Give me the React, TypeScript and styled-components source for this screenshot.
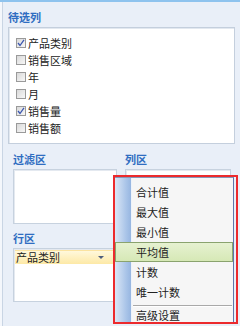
import React from 'react';
import styled, { createGlobalStyle } from 'styled-components';

const GlobalStyle = createGlobalStyle`
    html, body {
        margin: 0;
        padding: 0;
        background: #e9eff8;
    }
    body {
        font-family: "Noto Sans CJK SC", "Liberation Sans", sans-serif;
        font-size: 11px;
    }
`;

interface Field {
    name: string;
    checked: boolean;
}

const fields: Field[] = [
    { name: '产品类别', checked: true },
    { name: '销售区域', checked: false },
    { name: '年', checked: false },
    { name: '月', checked: false },
    { name: '销售量', checked: true },
    { name: '销售额', checked: false },
];

const menuItems = ['合计值', '最大值', '最小值', '平均值', '计数', '唯一计数'];

const App: React.FC = () => {
    return (
        <>
            <GlobalStyle />
            <Page>
                <Section>
                    <Title>待选列</Title>
                    <FieldBox>
                        {fields.map((f) => (
                            <FieldRow key={f.name}>
                                <CheckBox>
                                    {f.checked && (
                                        <svg width="8" height="8" viewBox="0 0 8 8">
                                            <path d="M1 4 L3 6.5 L7 0.8" fill="none" stroke="#3b57b0" strokeWidth="1.3" />
                                        </svg>
                                    )}
                                </CheckBox>
                                <span>{f.name}</span>
                            </FieldRow>
                        ))}
                    </FieldBox>
                </Section>

                <Columns>
                    <Zone>
                        <Title>过滤区</Title>
                        <DropBox />
                    </Zone>
                    <Zone $wide>
                        <Title>列区</Title>
                        <DropBox />
                    </Zone>
                </Columns>

                <RowSection>
                    <Title>行区</Title>
                    <DropBox $tall>
                        <RowItem>
                            <span>产品类别</span>
                            <Arrow />
                        </RowItem>
                    </DropBox>
                </RowSection>

                <Highlight>
                    <Menu>
                        <MenuStrip />
                        <MenuList>
                            {menuItems.map((m) => (
                                <MenuItem key={m} $active={m === '平均值'}>{m}</MenuItem>
                            ))}
                            <Separator />
                            <MenuItem $last>高级设置</MenuItem>
                        </MenuList>
                    </Menu>
                </Highlight>
            </Page>
        </>
    );
};

export default App;

const Page = styled.div`
    position: relative;
    width: 240px;
    height: 326px;
    box-sizing: border-box;
    overflow: hidden;
    background: #e9eff8;
    border-top: 2px solid #8ec3ee;
    box-shadow: inset 2px 0 0 #f4f7fc, inset 3px 0 0 #c9d5e4;
`;

const Section = styled.div`
    padding: 9px 5px 0 8px;
`;

const Title = styled.div`
    color: #2f6dc1;
    font-weight: bold;
    font-size: 11px;
    line-height: 13px;
    height: 13px;
    margin-bottom: 3px;
`;

const FieldBox = styled.div`
    box-sizing: border-box;
    height: 117px;
    background: #fff;
    border: 1px solid #c4cfdd;
    box-shadow: inset 1px 1px 0 #e2e8f0;
    padding: 6px 0 0 7px;
`;

const FieldRow = styled.div`
    display: flex;
    align-items: center;
    height: 17px;
    gap: 2px;
    color: #222;
    font-size: 11px;
`;

const CheckBox = styled.span`
    box-sizing: border-box;
    width: 10px;
    height: 10px;
    border: 1px solid #9a9a9a;
    background: linear-gradient(135deg, #d9d9d9, #f7f7f7);
    display: flex;
    align-items: center;
    justify-content: center;
`;

const Columns = styled.div`
    display: flex;
    gap: 8px;
    padding: 9px 9px 0 13px;
`;

const Zone = styled.div<{ $wide?: boolean }>`
    width: ${(p) => (p.$wide ? '106px' : '104px')};
`;

const DropBox = styled.div<{ $tall?: boolean }>`
    box-sizing: border-box;
    height: ${(p) => (p.$tall ? '54px' : '55px')};
    background: #fff;
    border: 1px solid #c7d2df;
    box-shadow: inset 1px 1px 0 #e4e9f0;
    padding: 1px;
`;

const RowSection = styled.div`
    padding: 8px 0 0 13px;
    width: 117px;
    box-sizing: border-box;
`;

const RowItem = styled.div`
    display: flex;
    align-items: center;
    justify-content: space-between;
    height: 13px;
    padding: 0 11px 0 1px;
    background: linear-gradient(#fff8dc, #fde9a6);
    border-top: 1px solid #fbe3a0;
    color: #222;
    font-size: 11px;
    line-height: 13px;
`;

const Arrow = styled.span`
    width: 0;
    height: 0;
    border-left: 3px solid transparent;
    border-right: 3px solid transparent;
    border-top: 3px solid #4d5d7e;
`;

const Highlight = styled.div`
    position: absolute;
    left: 113px;
    top: 173px;
    width: 125px;
    height: 149px;
    box-sizing: border-box;
    border: 2px solid #ec2a2d;
`;

const Menu = styled.div`
    display: flex;
    height: 100%;
    width: 119px;
    box-sizing: border-box;
    background: #f6f6f6;
    border-top: 1px solid #8696b8;
    border-right: 1px solid #5e74aa;
    overflow: hidden;
    position: relative;
`;

const MenuStrip = styled.div`
    position: absolute;
    left: 0;
    top: 0;
    bottom: 0;
    width: 16px;
    background: linear-gradient(90deg, #dbe7f6, #a9c4e8 70%, #97b6e1);
    border-right: 1px solid #eef3fa;
`;

const MenuList = styled.div`
    position: relative;
    flex: 1;
    padding-top: 4px;
`;

const MenuItem = styled.div<{ $active?: boolean; $last?: boolean }>`
    box-sizing: border-box;
    height: ${(p) => (p.$last ? '13px' : '20px')};
    line-height: ${(p) => (p.$last ? '12px' : '18px')};
    padding-left: 20px;
    color: #222;
    font-size: 11px;
    border: 1px solid ${(p) => (p.$active ? '#8aa36e' : 'transparent')};
    background: ${(p) => (p.$active ? 'linear-gradient(#e6f1d1, #d6e8b6)' : 'transparent')};
`;

const Separator = styled.div`
    margin: 3px 1px 1px 18px;
    height: 1px;
    background: #a9a9a9;
    border-bottom: 1px solid #fff;
`;
